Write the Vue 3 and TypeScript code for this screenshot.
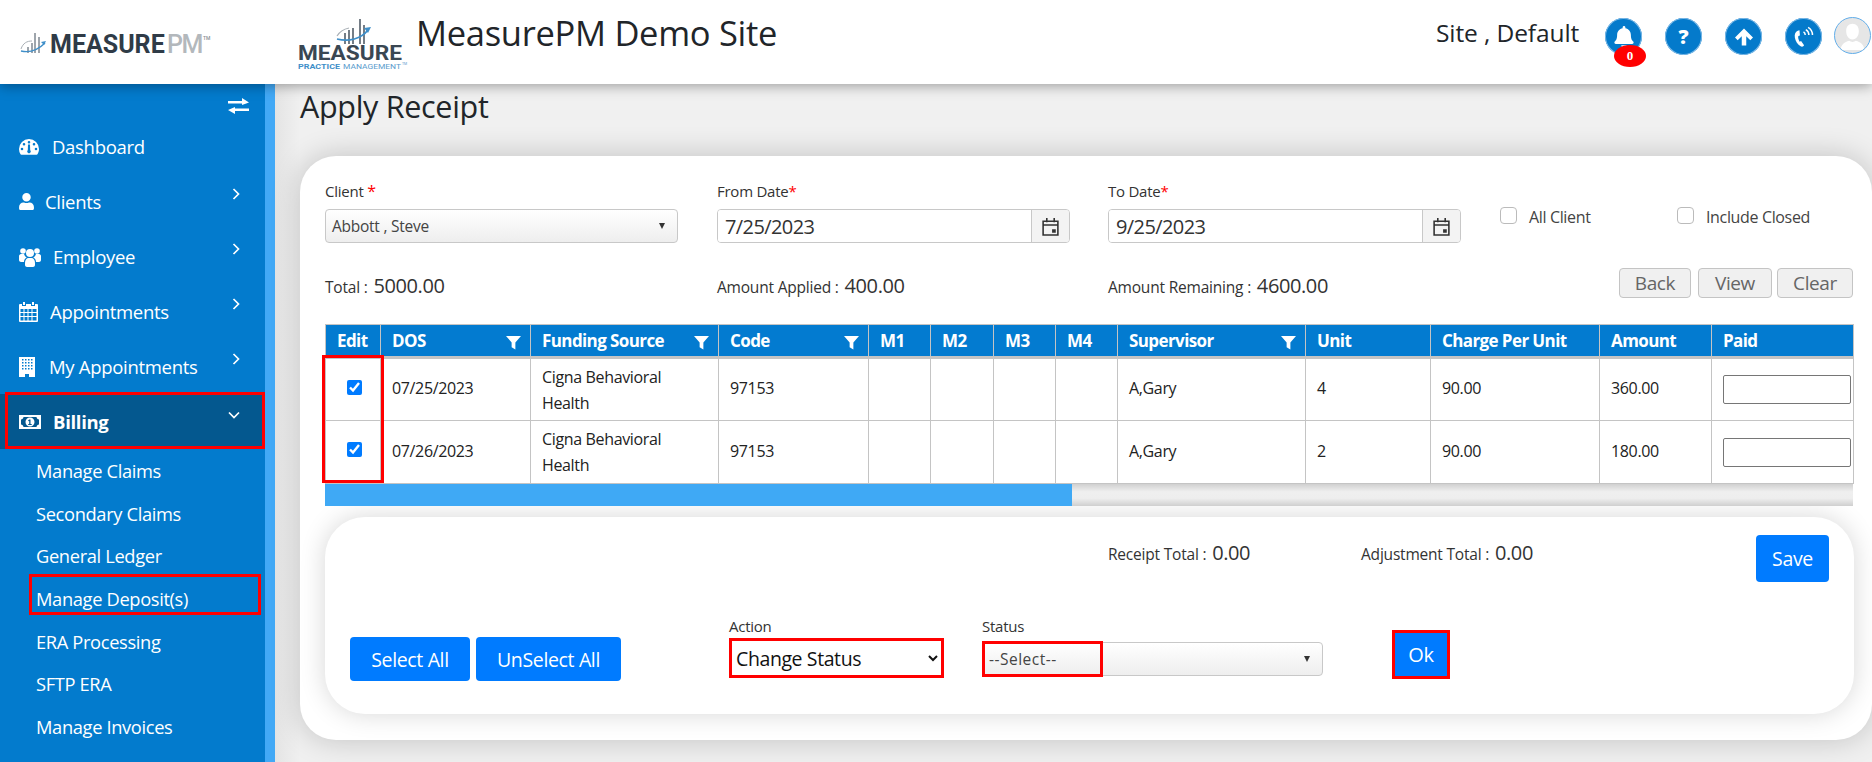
<script setup lang="ts">
interface NavItem { label: string; icon: string; box: number; chevron: boolean }
const nav: NavItem[] = [
  { label: 'Dashboard', icon: 'gauge', box: 33, chevron: false },
  { label: 'Clients', icon: 'user', box: 26, chevron: true },
  { label: 'Employee', icon: 'users', box: 34, chevron: true },
  { label: 'Appointments', icon: 'calendar', box: 31, chevron: true },
  { label: 'My Appointments', icon: 'building', box: 30, chevron: true },
]
const subs = ['Manage Claims', 'Secondary Claims', 'General Ledger', 'Manage Deposit(s)', 'ERA Processing', 'SFTP ERA', 'Manage Invoices']
const cols = [55, 150, 188, 150, 62, 63, 62, 62, 188, 125, 169, 112, 142]
const heads = [
  { t: 'Edit', f: false }, { t: 'DOS', f: true }, { t: 'Funding Source', f: true }, { t: 'Code', f: true },
  { t: 'M1', f: false }, { t: 'M2', f: false }, { t: 'M3', f: false }, { t: 'M4', f: false },
  { t: 'Supervisor', f: true }, { t: 'Unit', f: false }, { t: 'Charge Per Unit', f: false }, { t: 'Amount', f: false }, { t: 'Paid', f: false },
]
const rows = [
  { dos: '07/25/2023', unit: '4', amount: '360.00' },
  { dos: '07/26/2023', unit: '2', amount: '180.00' },
]
</script>

<template>
  <div class="app">
    <header class="top">
      <div class="brand">
        <svg class="brand-svg" width="190" height="24" viewBox="0 0 190 24">
          <path d="M8 15v6M12 11v10M15 1v20M19 5v16" stroke="#6b7680" stroke-width="1.300" fill="none" />
          <path d="M1 17c2-6 6-8 11-8" stroke="#a9b0b6" stroke-width="1" fill="none" />
          <path d="M1 19c9 2 17-1 24-8" stroke="#3f8fc9" stroke-width="1.400" fill="none" />
          <path d="M26 9l-5 1 3 3z" fill="#3f8fc9" />
          <text x="30" y="21" class="t-bold" font-size="25" fill="#2f3b47">MEASURE</text>
          <text x="147" y="21" class="t-med pm" font-size="25" fill="#b3b8bc">PM</text>
          <text x="183" y="8" class="t-med" font-size="5" fill="#8a9096">TM</text>
        </svg>
      </div>
      <div class="logo2">
        <svg width="115" height="56" viewBox="0 0 115 56">
          <path d="M48 17v11M52 14v14M56 12v16M63 3v25M67 9v19" stroke="#5d6872" stroke-width="1.700" fill="none" />
          <path d="M40 20c3-5 7-7 12-8" stroke="#a9b0b6" stroke-width="1.200" fill="none" />
          <path d="M40 23c12 3 24 0 31-9" stroke="#3f8fc9" stroke-width="1.800" fill="none" />
          <path d="M74 11l-7 1 4 5z" fill="#3f8fc9" />
          <text x="1" y="44" class="t-bold" font-size="19.700" fill="#3a4753" textLength="104" lengthAdjust="spacingAndGlyphs">MEASURE</text>
          <text x="1" y="53" class="t-bold" font-size="6.500" fill="#3f8fc9" textLength="42" lengthAdjust="spacingAndGlyphs">PRACTICE</text>
          <text x="46" y="53" class="t-reg" font-size="6.500" fill="#5a9ccd" textLength="58" lengthAdjust="spacingAndGlyphs">MANAGEMENT</text>
          <text x="105" y="49" class="t-reg" font-size="3.500" fill="#5a9ccd">TM</text>
        </svg>
      </div>
      <h1 class="site-title">MeasurePM Demo Site</h1>
      <div class="site-user">Site , Default</div>
      <div class="round bell">
        <svg viewBox="0 0 448 512"><path fill="#fff" d="M224 512c35.320 0 63.970-28.650 63.970-64H160.030c0 35.350 28.650 64 63.970 64zm215.390-149.710c-19.320-20.760-55.470-51.990-55.470-154.290 0-77.700-54.480-139.900-127.940-155.160V32c0-17.670-14.320-32-31.980-32s-31.980 14.330-31.980 32v20.840C118.560 68.100 64.080 130.300 64.080 208c0 102.300-36.150 133.530-55.470 154.290-6 6.450-8.660 14.160-8.610 21.710.11 16.400 12.980 32 32.100 32h383.800c19.120 0 32-15.600 32.100-32 .05-7.550-2.610-15.270-8.610-21.710z" /></svg>
        <span class="badge">0</span>
      </div>
      <div class="round"><span class="q">?</span></div>
      <div class="round up">
        <svg viewBox="0 0 16 16"><path fill="#fff" d="M8 .5L16 8.500l-2.400 2.400L10 7.300V15.500H6V7.300L2.400 10.900 0 8.500z" /></svg>
      </div>
      <div class="round phone">
        <svg viewBox="0 0 20 20">
          <path fill="#fff" d="M5 5c-2 1-3 3-2.500 6 .5 3 2.500 6 5 7.500 1 .6 2 .3 2.500-.2l.5-.7-2.600-3.600-1.300.6C5.800 13 5 10.500 5.500 9.500l1.400-.4L6.500 4.500z" />
          <path fill="none" stroke="#fff" stroke-width="1.300" d="M10 6c1 .6 1.500 1.500 1.500 2.800M12 4c1.800 1 2.700 2.700 2.700 4.800M14 2c2.500 1.400 3.800 3.900 3.800 6.800" />
        </svg>
      </div>
      <div class="avatar">
        <svg viewBox="0 0 36 36"><path fill="#fff" d="M18 6c4 0 6.500 3 6.500 7.500S22 22 18 22s-6.500-4-6.500-8.500S14 6 18 6zM6 33c0-6 4-8 8.500-9.500 2 1.500 5 1.500 7 0C26 25 30 27 30 33z" /></svg>
      </div>
    </header>

    <div class="body">
      <aside class="side">
        <div class="swap">
          <svg viewBox="0 0 21 16"><path fill="#fff" d="M0 3h14V0l7 4.500L14 7V5.400H0zM21 10.500H7V9L0 12l7 4v-3h14z" /></svg>
        </div>
        <a v-for="n in nav" :key="n.label" class="item">
          <span class="ico" :style="{ width: n.box + 'px' }">
            <svg v-if="n.icon === 'gauge'" width="20" height="16" viewBox="0 0 20 16"><path fill="#fff" fill-rule="evenodd" d="M10 0a10 10 0 0 1 10 10c0 2-.6 3.800-1.500 5.300-.2.300-.5.500-.9.500H2.400c-.4 0-.7-.2-.9-.5A10 10 0 0 1 0 10 10 10 0 0 1 10 0zM10 2a1.300 1.300 0 1 0 0 2.600A1.300 1.300 0 0 0 10 2zM5 4a1.300 1.300 0 1 0 0 2.600A1.300 1.300 0 0 0 5 4zM15 4a1.300 1.300 0 1 0 0 2.600A1.300 1.300 0 0 0 15 4zM3 8.700a1.300 1.300 0 1 0 0 2.600 1.300 1.300 0 0 0 0-2.600zM17 8.700a1.300 1.300 0 1 0 0 2.600 1.300 1.300 0 0 0 0-2.600zM9 5.500l-.2 5.800a1.700 1.700 0 1 0 2.400 0L11 5.500z" /></svg>
            <svg v-else-if="n.icon === 'user'" width="15" height="17" viewBox="0 0 448 512"><path fill="#fff" d="M224 256c70.700 0 128-57.300 128-128S294.700 0 224 0 96 57.300 96 128s57.300 128 128 128zm89.600 32h-16.700c-22.200 10.200-46.900 16-72.900 16s-50.600-5.800-72.900-16h-16.700C60.200 288 0 348.200 0 422.400V464c0 26.500 21.500 48 48 48h352c26.500 0 48-21.500 48-48v-41.600c0-74.200-60.200-134.400-134.400-134.400z" /></svg>
            <svg v-else-if="n.icon === 'users'" width="22" height="20" viewBox="0 0 22 20"><g fill="#fff"><circle cx="4" cy="4" r="2.800" /><circle cx="18" cy="4" r="2.800" /><circle cx="11" cy="6" r="4" /><path d="M0 9c0-1 1-2 2-2h3c.6 1.600 1.600 3 2.800 3.600C6 11.400 5 13 5 15H2c-1 0-2-1-2-2zM22 9c0-1-1-2-2-2h-3c-.6 1.600-1.600 3-2.800 3.600 1.800.8 2.800 2.400 2.800 4.400h3c1 0 2-1 2-2z" /><path d="M6 16c0-3 1.500-5 3.500-5h3c2 0 3.500 2 3.500 5v2c0 1-1 2-2 2H8c-1 0-2-1-2-2z" /></g></svg>
            <svg v-else-if="n.icon === 'calendar'" width="19" height="20" viewBox="0 0 19 20"><path fill="#fff" fill-rule="evenodd" d="M4 0h2v3H4zM13 0h2v3h-2zM1 2h2v2h4V2h5v2h4V2h2a1 1 0 0 1 1 1v16a1 1 0 0 1-1 1H1a1 1 0 0 1-1-1V3a1 1 0 0 1 1-1zM1.500 7v3h3V7zM5.500 7v3h3V7zM9.500 7v3h3V7zM13.500 7v3h4V7zM1.500 11v3h3v-3zM5.500 11v3h3v-3zM9.500 11v3h3v-3zM13.500 11v3h4v-3zM1.500 15v3.500h3V15zM5.500 15v3.500h3V15zM9.500 15v3.500h3V15zM13.500 15v3.500h4V15z" /></svg>
            <svg v-else width="16" height="20" viewBox="0 0 16 20"><path fill="#fff" fill-rule="evenodd" d="M0 0h16v20H10v-3H6v3H0zM3 2v1.500h1.500V2zM6 2v1.500h1.500V2zM9 2v1.500h1.500V2zM12 2v1.500h1.500V2zM3 5v1.500h1.500V5zM6 5v1.500h1.500V5zM9 5v1.500h1.500V5zM12 5v1.500h1.500V5zM3 8v1.500h1.500V8zM6 8v1.500h1.500V8zM9 8v1.500h1.500V8zM12 8v1.500h1.500V8zM3 11v1.500h1.500V11zM6 11v1.500h1.500V11zM9 11v1.500h1.500V11zM12 11v1.500h1.500V11z" /></svg>
          </span>
          <span class="item-label">{{ n.label }}</span>
          <svg v-if="n.chevron" class="chev" viewBox="0 0 8 12"><path d="M1.500 1l5 5-5 5" fill="none" stroke="#fff" stroke-width="1.700" /></svg>
        </a>
        <a class="item active">
          <span class="ico billing-ico">
            <svg width="22" height="14" viewBox="0 0 22 14"><path fill="#fff" fill-rule="evenodd" d="M0 0h22v14H0zM4.500 2C4.300 3.400 3.300 4.300 2 4.500v5C3.300 9.700 4.300 10.600 4.500 12h13c.2-1.400 1.200-2.300 2.500-2.500v-5C18.700 4.300 17.700 3.400 17.500 2zM11 2.500a4.500 4.500 0 1 1 0 9 4.500 4.500 0 0 1 0-9zM11.500 4.500h-1.300L9 5.500l.7.800.5-.4V9H9.200v1h3.500V9h-1.200z" /></svg>
          </span>
          <span class="item-label strong">Billing</span>
          <svg class="chev down" viewBox="0 0 12 8"><path d="M1 1.500l5 5 5-5" fill="none" stroke="#fff" stroke-width="1.700" /></svg>
        </a>
        <ul class="subs">
          <li v-for="s in subs" :key="s" :class="{ marked: s === 'Manage Deposit(s)' }">{{ s }}</li>
        </ul>
      </aside>

      <main class="main">
        <h2 class="title">Apply Receipt</h2>
        <section class="card">
          <div class="filters">
            <div class="field">
              <label>Client <em class="req big">*</em></label>
              <div class="fake-select"><span>Abbott , Steve</span><i class="tri"></i></div>
            </div>
            <div class="field">
              <label>From Date<em class="req">*</em></label>
              <div class="date">
                <input value="7/25/2023" readonly />
                <span class="addon"><svg viewBox="0 0 16 18"><path fill="none" stroke="#333" stroke-width="1.500" d="M1 4h14v13H1zM1 7.500h14M4.500 1v4M11.500 1v4" /><path fill="#333" d="M9.500 11.500h3.500v3.500H9.500z" /></svg></span>
              </div>
            </div>
            <div class="field">
              <label>To Date<em class="req">*</em></label>
              <div class="date">
                <input value="9/25/2023" readonly />
                <span class="addon"><svg viewBox="0 0 16 18"><path fill="none" stroke="#333" stroke-width="1.500" d="M1 4h14v13H1zM1 7.500h14M4.500 1v4M11.500 1v4" /><path fill="#333" d="M9.500 11.500h3.500v3.500H9.500z" /></svg></span>
              </div>
            </div>
            <div class="checks">
              <label class="chk first"><input type="checkbox" />All Client</label>
              <label class="chk"><input type="checkbox" />Include Closed</label>
            </div>
          </div>

          <div class="totals">
            <div class="tot shift">Total : <b>5000.00</b></div>
            <div class="tot shift">Amount Applied : <b>400.00</b></div>
            <div class="tot shift">Amount Remaining : <b>4600.00</b></div>
            <div class="grey-btns">
              <button class="grey w72">Back</button>
              <button class="grey w74">View</button>
              <button class="grey w76">Clear</button>
            </div>
          </div>

          <div class="grid-wrap">
            <table class="grid">
              <colgroup><col v-for="(c, i) in cols" :key="i" :style="{ width: c + 'px' }" /></colgroup>
              <thead>
                <tr>
                  <th v-for="h in heads" :key="h.t">
                    <span class="th-in">
                      <span>{{ h.t }}</span>
                      <svg v-if="h.f" class="funnel" viewBox="0 0 16 16"><path fill="#fff" d="M0 1h16L10 8v7.500L6 13V8z" /></svg>
                    </span>
                  </th>
                </tr>
              </thead>
              <tbody>
                <tr v-for="r in rows" :key="r.dos">
                  <td class="c"><input class="tick" type="checkbox" checked /></td>
                  <td>{{ r.dos }}</td>
                  <td class="two">Cigna Behavioral<br />Health</td>
                  <td>97153</td>
                  <td></td><td></td><td></td><td></td>
                  <td>A,Gary</td>
                  <td>{{ r.unit }}</td>
                  <td>90.00</td>
                  <td>{{ r.amount }}</td>
                  <td class="paid"><input /></td>
                </tr>
              </tbody>
            </table>
            <div class="edit-mark"></div>
            <div class="scroll"><div class="thumb"></div></div>
          </div>

          <section class="panel">
            <div class="panel-top">
              <div class="tot tot-a">Receipt Total : <b>0.00</b></div>
              <div class="tot tot-b">Adjustment Total : <b>0.00</b></div>
              <button class="blue save">Save</button>
            </div>
            <div class="panel-bottom">
              <button class="blue sel">Select All</button>
              <button class="blue unsel">UnSelect All</button>
              <div class="action">
                <label>Action</label>
                <select><option>Change Status</option></select>
              </div>
              <div class="status">
                <label>Status</label>
                <div class="fake-select st"><span>--Select--</span><i class="tri"></i><div class="st-mark"></div></div>
              </div>
              <button class="blue ok">Ok</button>
            </div>
          </section>
        </section>
      </main>
    </div>
  </div>
</template>

<style>
html, body { margin: 0; padding: 0; overflow: hidden; }
</style>

<style scoped>
.app { width: 1872px; height: 762px; overflow: hidden; font-family: "Open Sans", "Noto Sans", sans-serif; color: #212529; background: #eee; display: flex; flex-direction: column; }
.top { height: 84px; flex: none; background: #fff; display: flex; align-items: flex-start; position: relative; z-index: 2; box-shadow: 0 2px 12px rgba(0,0,0,.35); }
.brand { width: 297px; box-sizing: border-box; padding: 32px 0 0 20px; height: 84px; flex: none; }
.brand-svg, .logo2 svg { display: block; overflow: visible; }
.t-bold { font-family: Roboto, sans-serif; font-weight: 700; }
.t-med { font-family: Roboto, sans-serif; font-weight: 500; }
.t-reg { font-family: Roboto, sans-serif; font-weight: 400; }
.pm { letter-spacing: -1.5px; }
.logo2 { width: 119px; flex: none; padding-top: 16px; box-sizing: border-box; height: 84px; }
.site-title { margin: 10px 0 0; font-size: 34.500px; line-height: 46px; font-weight: 500; letter-spacing: -.3px; width: 1020px; flex: none; white-space: nowrap; }
.site-user { font-size: 24.500px; line-height: 34px; margin-top: 16px; width: 169px; letter-spacing: -.1px; flex: none; white-space: nowrap; }
.round { width: 37px; height: 37px; border-radius: 50%; background: #047acb; margin: 18px 23px 0 0; flex: none; display: flex; align-items: center; justify-content: center; position: relative; box-shadow: 0 0 0 1px #7db9e6 inset; }
.round svg { width: 20px; height: 20px; }
.round.bell svg { height: 22px; }
.round.up svg { width: 18px; height: 18px; }
.round.phone svg { width: 23px; height: 23px; }
.q { color: #fff; font-weight: 800; font-size: 20px; line-height: 1; }
.badge { position: absolute; left: 9px; top: 27px; width: 32px; height: 22px; border-radius: 50%; background: #f00; color: #fff; font: 700 13px/22px "Liberation Serif", serif; text-align: center; }
.avatar { width: 37px; height: 37px; border-radius: 50%; background: #e6e6e6; border: 1px solid #62aeea; box-sizing: border-box; margin: 17px 0 0 -11px; overflow: hidden; flex: none; }
.avatar svg { display: block; width: 35px; height: 35px; }

.body { flex: 1; display: flex; min-height: 0; }
.side { width: 265px; flex: none; background: #037bcd; border-right: 10px solid #42a9f6; color: #fff; }
.swap { height: 35px; display: flex; justify-content: flex-end; padding: 14px 16px 0 0; box-sizing: border-box; }
.swap svg { width: 21px; height: 16px; }
.item { height: 55px; display: flex; align-items: center; padding-left: 19px; position: relative; font-size: 18.500px; letter-spacing: -.3px; }
.ico { display: flex; align-items: center; flex: none; }
.billing-ico { width: 34px; }
.chev { position: absolute; left: 232px; top: 14px; width: 8px; height: 12px; }
.chev.down { left: 228px; top: 17px; width: 12px; height: 8px; }
.item.active { background: #04588f; }
.item.active::after { content: ""; position: absolute; left: 5px; right: 0; top: -2px; bottom: 0; border: 3px solid #f00; pointer-events: none; }
.strong { font-weight: 700; }
.subs { list-style: none; margin: 1px 0 0; padding: 0; }
.subs li { height: 42.700px; line-height: 42.700px; padding-left: 36px; font-size: 18.300px; letter-spacing: -.35px; position: relative; white-space: nowrap; }
.subs li.marked::after { content: ""; position: absolute; left: 29px; right: 4px; top: -4px; bottom: 6px; border: 3px solid #f00; }

.main { flex: 1; min-width: 0; padding-left: 25px; background: linear-gradient(90deg, #e4e4e4, #f0f0f0 25px); }
.title { margin: 0; height: 72px; box-sizing: border-box; padding-top: 4px; font-size: 30.500px; line-height: 36px; font-weight: 500; letter-spacing: -.3px; }
.card { background: #fff; width: 1572px; height: 584px; box-sizing: border-box; padding: 25px 19px 0 25px; border-radius: 36px; box-shadow: 0 0 30px rgba(0,0,0,.2); }
.filters { display: grid; grid-template-columns: 392px 391px 392px 1fr; height: 62px; }
.field { width: 353px; }
.field label, .action label, .status label { display: block; font-size: 15px; line-height: 20px; letter-spacing: -.25px; color: #333; }
.req { color: #f00; font-style: normal; }
.req.big { font-size: 16px; line-height: 1; }
.fake-select { margin-top: 8px; height: 34px; box-sizing: border-box; border: 1px solid #c8c8c8; border-radius: 4px; background: linear-gradient(#fff, #eee); display: flex; align-items: center; justify-content: space-between; padding: 0 12px 0 6px; font-size: 15.500px; letter-spacing: -.25px; color: #444; position: relative; }
.tri { width: 0; height: 0; border-left: 3.500px solid transparent; border-right: 3.500px solid transparent; border-top: 6px solid #333; }
.date { margin-top: 8px; height: 34px; box-sizing: border-box; border: 1px solid #c8c8c8; border-radius: 4px; display: flex; overflow: hidden; }
.date input { flex: 1; min-width: 0; border: 0; outline: 0; padding: 0 7px; font: 20px "Open Sans", sans-serif; letter-spacing: -.6px; color: #333; background: #fff; }
.addon { width: 37px; flex: none; background: #f3f3f3; border-left: 1px solid #c8c8c8; display: flex; align-items: center; justify-content: center; }
.addon svg { width: 17px; height: 19px; }
.checks { display: flex; }
.chk { display: flex; align-items: flex-start; font-size: 16px; line-height: 20px; letter-spacing: -.35px; color: #444; margin-top: 26px; white-space: nowrap; }
.chk.first { width: 177px; }
.chk input { appearance: none; width: 17px; height: 17px; margin: 0 12px 0 0; box-sizing: border-box; border: 1px solid #bbb; border-radius: 4px; background: #fff; flex: none; }

.totals { display: grid; grid-template-columns: 392px 391px 392px 1fr; height: 30px; margin-top: 23px; align-items: center; }
.tot { font-size: 15.500px; letter-spacing: -.2px; color: #333; white-space: nowrap; }
.tot.shift { padding-top: 6px; }
.tot b { font-weight: 400; font-size: 20px; letter-spacing: -.4px; margin-left: 2px; }
.grey-btns { display: flex; justify-content: flex-end; height: 30px; }
.grey { height: 30px; box-sizing: border-box; margin-left: 6px; padding: 0; border: 1px solid #c4c4c4; border-radius: 4px; background: #f0f0f0; color: #666; font: 19px "Open Sans", sans-serif; letter-spacing: -.4px; }
.w72 { width: 72px; } .w74 { width: 74px; margin-left: 7px; } .w76 { width: 76px; margin-left: 5px; }

.grid-wrap { margin-top: 28px; width: 1528px; position: relative; }
.grid { border-collapse: collapse; table-layout: fixed; width: 1528px; font-size: 16px; letter-spacing: -.35px; color: #222; }
.grid th { height: 33px; padding: 0 11px; background: #037bd0; color: #fff; text-align: left; font-size: 17px; font-weight: 700; letter-spacing: -.6px; border: 1px solid #c4c4c4; border-bottom: 3px solid #c4c4c4; box-sizing: border-box; white-space: nowrap; }
.grid th:first-child { padding: 0 0 0 11px; }
.th-in { display: flex; align-items: center; justify-content: space-between; }
.funnel { width: 15px; height: 15px; margin: 3px -2px 0 0; flex: none; }
.grid td { height: 63px; padding: 0 11px 3px; border: 1px solid #c4c4c4; box-sizing: border-box; background: #fff; vertical-align: middle; white-space: nowrap; }
.grid td.c { padding: 0 0 0 21px; }
.tick { display: block; width: 15px; height: 15px; margin: -5px 0 0; accent-color: #007bff; }
.grid td.two { line-height: 26px; padding: 0 11px; }
.grid td.paid { padding: 0 0 0 11px; }
.paid input { display: block; width: 128px; height: 29px; box-sizing: border-box; border: 1px solid #767676; border-radius: 2px; background: #fff; }
.edit-mark { position: absolute; left: -3px; top: 31px; width: 62px; height: 128px; box-sizing: border-box; border: 3px solid #f00; pointer-events: none; }
.scroll { height: 22px; background: linear-gradient(#d0d0d0, #efefef 35%, #eee 65%, #cfcfcf); }
.thumb { width: 747px; height: 22px; background: #3fa9f5; }

.panel { margin-top: 11px; width: 1529px; height: 197px; box-sizing: border-box; padding: 18px 25px 0 25px; border-radius: 40px; background: #fff; box-shadow: 0 0 26px rgba(0,0,0,.16); }
.panel-top { display: flex; align-items: flex-start; height: 47px; padding-left: 758px; }
.tot-a { width: 253px; margin-top: 6px; line-height: 24px; }
.tot-b { margin-top: 6px; line-height: 24px; }
.save { margin-left: auto; width: 73px; height: 47px; }
.blue { border: 0; background: #007bff; color: #fff; border-radius: 4px; font: 19.500px "Open Sans", sans-serif; letter-spacing: -.35px; padding: 0; }
.panel-bottom { display: flex; align-items: flex-start; margin-top: 34px; }
.sel { width: 120px; height: 44px; margin-top: 21px; }
.unsel { width: 145px; height: 44px; margin: 21px 0 0 6px; }
.action { margin-left: 108px; width: 215px; }
.action select { display: block; margin-top: 2px; width: 215px; height: 40px; box-sizing: border-box; border: 3px solid #f00; border-radius: 0; padding-left: 0; background: #fff; font: 19.500px "Open Sans", sans-serif; letter-spacing: -.4px; color: #111; }
.status { margin-left: 38px; width: 341px; }
.fake-select.st { margin-top: 6px; letter-spacing: .5px; }
.st-mark { position: absolute; left: -1px; top: -2px; width: 121px; height: 36px; box-sizing: border-box; border: 3px solid #f00; }
.ok { width: 58px; height: 49px; margin: 14px 0 0 69px; border: 3px solid #f00; border-radius: 0; box-sizing: border-box; font-size: 20px; }
</style>
